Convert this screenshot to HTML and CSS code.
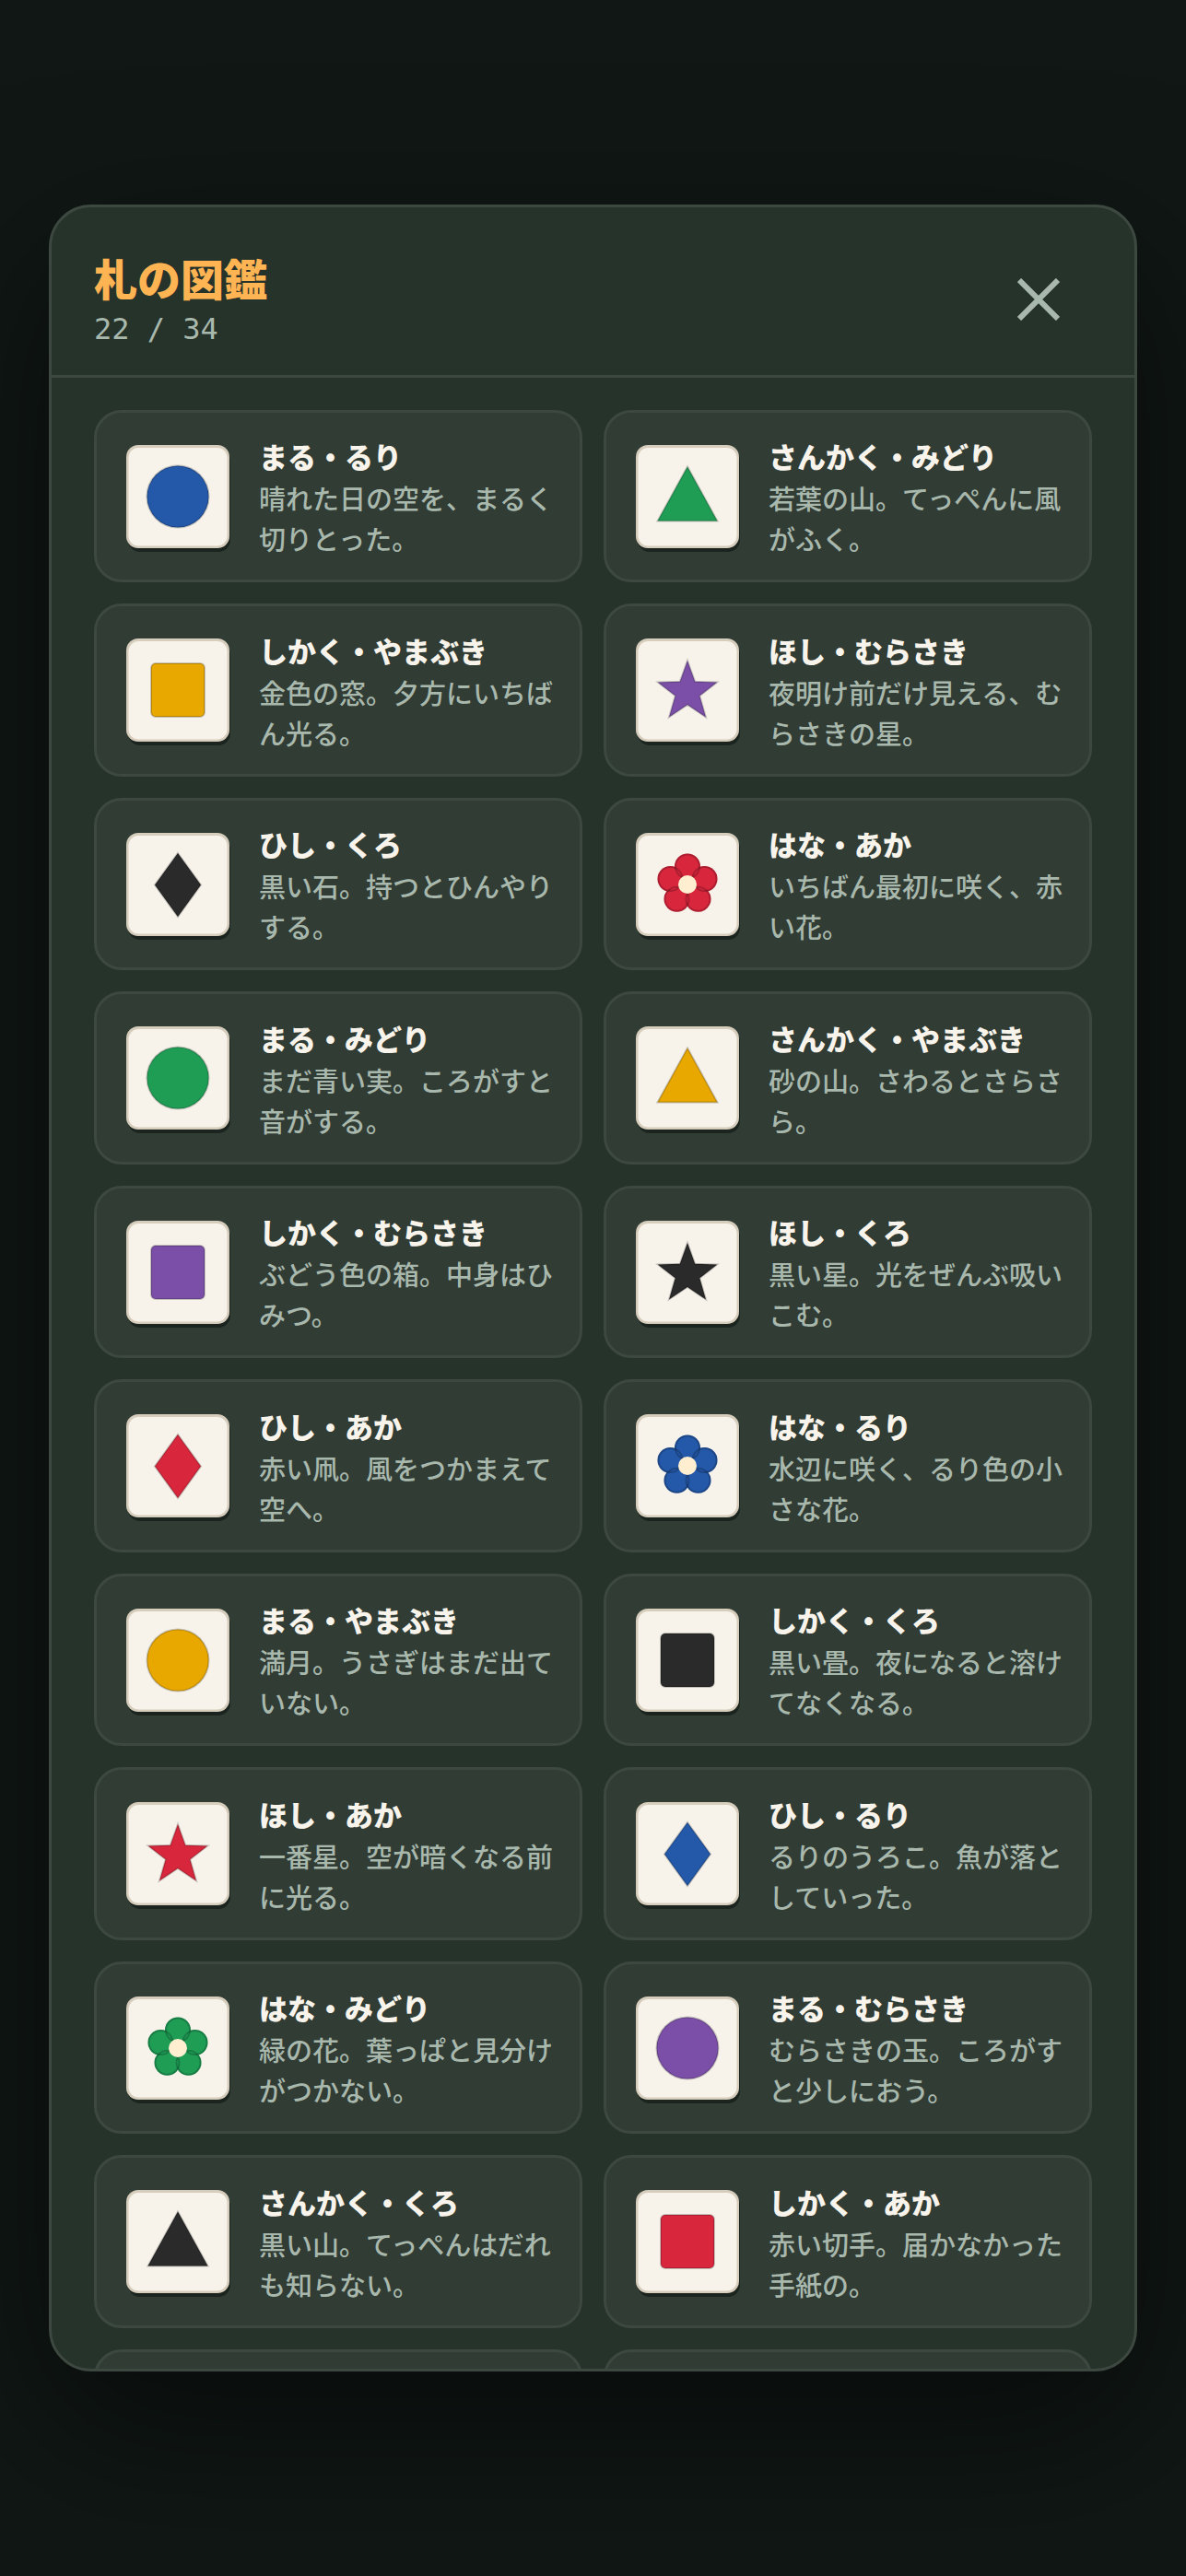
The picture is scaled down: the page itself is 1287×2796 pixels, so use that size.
FILE: index.html
```
<!DOCTYPE html>
<html lang="ja">
<head>
    <meta charset="UTF-8">
    <meta name="viewport" content="width=device-width, initial-scale=1.0">
    <title>札の図鑑</title>
    <link rel="stylesheet" href="styles.css">
</head>
<body>

    <!-- Shared tile and shapes -->
    <svg class="defs" aria-hidden="true">
        <symbol id="tile" viewBox="0 0 124 124">
            <rect x="8" y="10" width="111" height="112" rx="13" fill="#1b241e"/>
            <rect x="6" y="6" width="112" height="112" rx="13" fill="#d6cdbd"/>
            <rect x="8.5" y="9" width="107" height="106.500" rx="11" fill="#f7f3eb"/>
        </symbol>
        <symbol id="maru" viewBox="0 0 124 124">
            <circle cx="62" cy="62" r="33.500"/>
        </symbol>
        <symbol id="sankaku" viewBox="0 0 124 124">
            <path d="M62 29.500 94.500 88.500H29.500Z"/>
        </symbol>
        <symbol id="shikaku" viewBox="0 0 124 124">
            <rect x="33" y="33" width="58" height="58" rx="5"/>
        </symbol>
        <symbol id="hoshi" viewBox="0 0 124 124">
            <path d="M62 30 70.200 52.700 94.300 53.500 75.300 68.300 82 91.500 62 78 42 91.500 48.700 68.300 29.700 53.500 53.800 52.700Z"/>
        </symbol>
        <symbol id="hishi" viewBox="0 0 124 124">
            <path d="M62 28 87 62.500 62 97 37 62.500Z"/>
        </symbol>
        <symbol id="hana" viewBox="0 0 124 124">
            <g stroke="none">
                <circle cx="62" cy="42.500" r="14"/>
                <circle cx="80.500" cy="56" r="14"/>
                <circle cx="73.500" cy="77.800" r="14"/>
                <circle cx="50.500" cy="77.800" r="14"/>
                <circle cx="43.500" cy="56" r="14"/>
            </g>
            <g fill="none">
                <circle cx="62" cy="42.500" r="13"/>
                <circle cx="80.500" cy="56" r="13"/>
                <circle cx="73.500" cy="77.800" r="13"/>
                <circle cx="50.500" cy="77.800" r="13"/>
                <circle cx="43.500" cy="56" r="13"/>
            </g>
            <circle cx="62" cy="62" r="10" fill="#ffefd0" stroke="none"/>
        </symbol>
    </svg>

    <div class="overlay">
        <section class="panel">
            <header class="panel-header">
                <div>
                    <h1 class="panel-title">札の図鑑</h1>
                    <p class="panel-count">22 / 34</p>
                </div>
                <button class="close" type="button" aria-label="閉じる">
                    <svg class="close-icon" viewBox="0 0 46 46"><path d="M2 2 44 44M44 2 2 44"/></svg>
                </button>
            </header>

            <ul class="cards">
                <li class="card">
                    <svg class="fuda ruri"><use href="#tile"/><use href="#maru"/></svg>
                    <div><h2 class="name">まる・るり</h2><p class="desc">晴れた日の空を、まるく切りとった。</p></div>
                </li>
                <li class="card">
                    <svg class="fuda midori"><use href="#tile"/><use href="#sankaku"/></svg>
                    <div><h2 class="name">さんかく・みどり</h2><p class="desc">若葉の山。てっぺんに風がふく。</p></div>
                </li>
                <li class="card">
                    <svg class="fuda yamabuki"><use href="#tile"/><use href="#shikaku"/></svg>
                    <div><h2 class="name">しかく・やまぶき</h2><p class="desc">金色の窓。夕方にいちばん光る。</p></div>
                </li>
                <li class="card">
                    <svg class="fuda murasaki"><use href="#tile"/><use href="#hoshi"/></svg>
                    <div><h2 class="name">ほし・むらさき</h2><p class="desc">夜明け前だけ見える、むらさきの星。</p></div>
                </li>
                <li class="card">
                    <svg class="fuda kuro"><use href="#tile"/><use href="#hishi"/></svg>
                    <div><h2 class="name">ひし・くろ</h2><p class="desc">黒い石。持つとひんやりする。</p></div>
                </li>
                <li class="card">
                    <svg class="fuda aka"><use href="#tile"/><use href="#hana"/></svg>
                    <div><h2 class="name">はな・あか</h2><p class="desc">いちばん最初に咲く、赤い花。</p></div>
                </li>
                <li class="card">
                    <svg class="fuda midori"><use href="#tile"/><use href="#maru"/></svg>
                    <div><h2 class="name">まる・みどり</h2><p class="desc">まだ青い実。ころがすと音がする。</p></div>
                </li>
                <li class="card">
                    <svg class="fuda yamabuki"><use href="#tile"/><use href="#sankaku"/></svg>
                    <div><h2 class="name">さんかく・やまぶき</h2><p class="desc">砂の山。さわるとさらさら。</p></div>
                </li>
                <li class="card">
                    <svg class="fuda murasaki"><use href="#tile"/><use href="#shikaku"/></svg>
                    <div><h2 class="name">しかく・むらさき</h2><p class="desc">ぶどう色の箱。中身はひみつ。</p></div>
                </li>
                <li class="card">
                    <svg class="fuda kuro"><use href="#tile"/><use href="#hoshi"/></svg>
                    <div><h2 class="name">ほし・くろ</h2><p class="desc">黒い星。光をぜんぶ吸いこむ。</p></div>
                </li>
                <li class="card">
                    <svg class="fuda aka"><use href="#tile"/><use href="#hishi"/></svg>
                    <div><h2 class="name">ひし・あか</h2><p class="desc">赤い凧。風をつかまえて空へ。</p></div>
                </li>
                <li class="card">
                    <svg class="fuda ruri"><use href="#tile"/><use href="#hana"/></svg>
                    <div><h2 class="name">はな・るり</h2><p class="desc">水辺に咲く、るり色の小さな花。</p></div>
                </li>
                <li class="card">
                    <svg class="fuda yamabuki"><use href="#tile"/><use href="#maru"/></svg>
                    <div><h2 class="name">まる・やまぶき</h2><p class="desc">満月。うさぎはまだ出ていない。</p></div>
                </li>
                <li class="card">
                    <svg class="fuda kuro"><use href="#tile"/><use href="#shikaku"/></svg>
                    <div><h2 class="name">しかく・くろ</h2><p class="desc">黒い畳。夜になると溶けてなくなる。</p></div>
                </li>
                <li class="card">
                    <svg class="fuda aka"><use href="#tile"/><use href="#hoshi"/></svg>
                    <div><h2 class="name">ほし・あか</h2><p class="desc">一番星。空が暗くなる前に光る。</p></div>
                </li>
                <li class="card">
                    <svg class="fuda ruri"><use href="#tile"/><use href="#hishi"/></svg>
                    <div><h2 class="name">ひし・るり</h2><p class="desc">るりのうろこ。魚が落としていった。</p></div>
                </li>
                <li class="card">
                    <svg class="fuda midori"><use href="#tile"/><use href="#hana"/></svg>
                    <div><h2 class="name">はな・みどり</h2><p class="desc">緑の花。葉っぱと見分けがつかない。</p></div>
                </li>
                <li class="card">
                    <svg class="fuda murasaki"><use href="#tile"/><use href="#maru"/></svg>
                    <div><h2 class="name">まる・むらさき</h2><p class="desc">むらさきの玉。ころがすと少しにおう。</p></div>
                </li>
                <li class="card">
                    <svg class="fuda kuro"><use href="#tile"/><use href="#sankaku"/></svg>
                    <div><h2 class="name">さんかく・くろ</h2><p class="desc">黒い山。てっぺんはだれも知らない。</p></div>
                </li>
                <li class="card">
                    <svg class="fuda aka"><use href="#tile"/><use href="#shikaku"/></svg>
                    <div><h2 class="name">しかく・あか</h2><p class="desc">赤い切手。届かなかった手紙の。</p></div>
                </li>
                <li class="card"></li>
                <li class="card"></li>
            </ul>
        </section>
    </div>

</body>
</html>
```

FILE: styles.css
```
* {
    box-sizing: border-box;
}

body {
    margin: 0;
    background-color: #101714;
    color: #f8f4ec;
    font-family: "Noto Sans CJK JP", sans-serif;
}

h1, h2, p, ul {
    margin: 0;
    padding: 0;
}

.defs {
    display: none;
}

.overlay {
    display: flex;
    align-items: center;
    height: 100vh;
    padding: 222px 53px;
    overflow: hidden;
}

.panel {
    display: flex;
    flex-direction: column;
    width: 100%;
    max-height: 100%;
    overflow: hidden;
    background-color: #26332a;
    border: 3px solid #3c4840;
    border-radius: 46px;
    box-shadow: 0 58px 176px rgba(0, 0, 0, 0.5);
}

/* Header */
.panel-header {
    display: flex;
    flex-shrink: 0;
    align-items: center;
    justify-content: space-between;
    padding: 41px 46px 24px;
    border-bottom: 3px solid #3c4840;
}

.panel-title {
    color: #ffb454;
    font-size: 47px;
    font-weight: 900;
    line-height: 66px;
}

.panel-count {
    color: #a9b8ad;
    font-family: "DejaVu Sans Mono", monospace;
    font-size: 32px;
    line-height: 47px;
}

.close {
    display: flex;
    align-items: center;
    justify-content: center;
    width: 117px;
    height: 117px;
    padding: 0;
    background: none;
    border: none;
    color: #a9b8ad;
    cursor: pointer;
}

.close-icon {
    width: 46px;
    height: 46px;
    fill: none;
    stroke: currentColor;
    stroke-width: 6;
}

/* Card list, scrolls inside the panel */
.cards {
    display: grid;
    grid-template-columns: 1fr 1fr;
    grid-auto-rows: minmax(187px, auto) minmax(188px, auto);
    gap: 23px;
    padding: 35px 46px;
    overflow-y: auto;
    scrollbar-width: none;
    list-style: none;
}

.card {
    display: flex;
    align-items: center;
    gap: 26px;
    padding: 23px;
    background-color: #303c34;
    border: 3px solid #3c4840;
    border-radius: 30px;
}

.name {
    font-size: 31px;
    font-weight: 900;
    line-height: 47px;
}

.desc {
    color: #a9b8ad;
    font-size: 29px;
    font-weight: 500;
    line-height: 44px;
}

.fuda {
    flex-shrink: 0;
    width: 124px;
    height: 124px;
    margin-left: 3px;
    fill: currentColor;
    stroke: rgba(0, 0, 0, 0.2);
    stroke-width: 2;
}

#tile {
    stroke: none;
}

.ruri { color: #2458a8; }
.midori { color: #1f9d55; }
.yamabuki { color: #e8a800; }
.murasaki { color: #7b4fa8; }
.kuro { color: #2a2a2a; }
.aka { color: #d8263c; }
```
